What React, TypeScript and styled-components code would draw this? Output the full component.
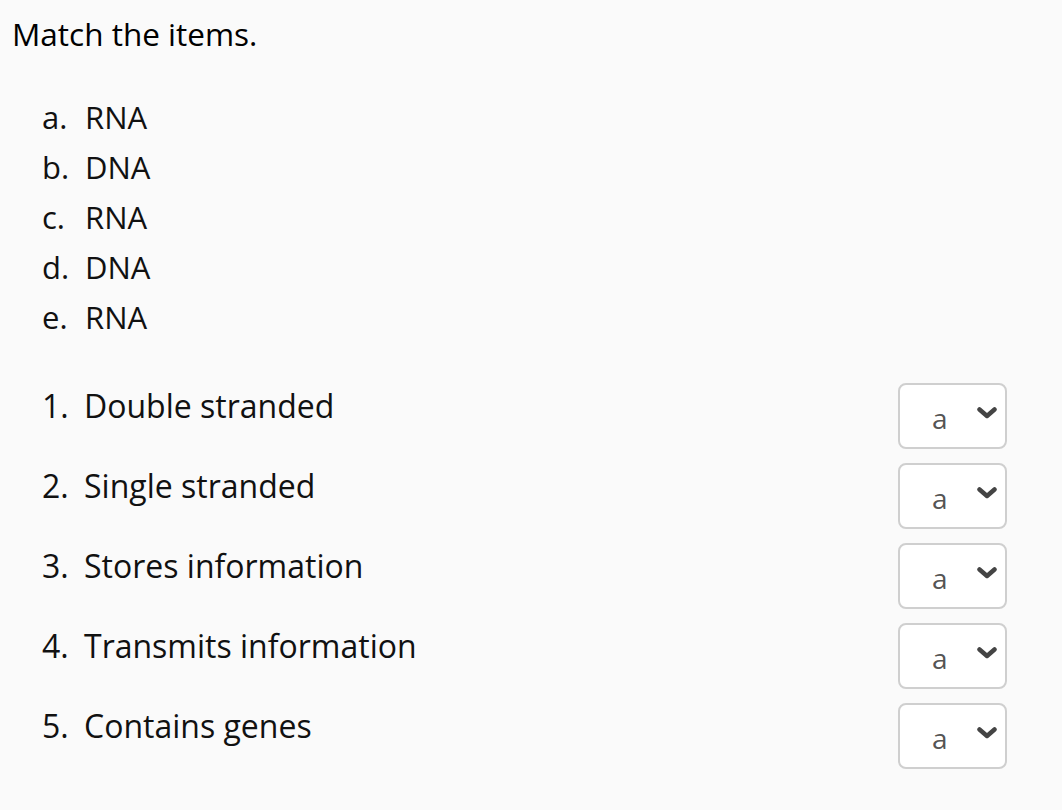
import styled, { createGlobalStyle } from "styled-components"

const GlobalStyle = createGlobalStyle`
  html, body {
    margin: 0;
    padding: 0;
    background: #fafafa;
  }
  body {
    font-family: "Open Sans", "Liberation Sans", sans-serif;
    color: #111;
  }
`

const Page = styled.div`
  padding: 10px 55px 0 12px;
  min-height: 800px;
  box-sizing: border-box;
`

const Title = styled.div`
  font-size: 31.5px;
  line-height: 48px;
  color: #000;
`

const Options = styled.ol`
  list-style: none;
  margin: 34px 0 0 30px;
  padding: 0;
`

const Option = styled.li`
  display: flex;
  font-size: 31px;
  line-height: 50px;
`

const Marker = styled.span`
  width: ${(props: { width: number }) => props.width}px;
  flex-shrink: 0;
`

const Questions = styled.ol`
  list-style: none;
  margin: 40px 0 0 30px;
  padding: 0;
`

const Question = styled.li`
  display: flex;
  justify-content: space-between;
  align-items: flex-start;
  height: 80px;
`

const Prompt = styled.div`
  display: flex;
  font-size: 32px;
  line-height: 48px;
`

const SelectBox = styled.div`
  margin-top: 1px;
  width: 109px;
  height: 66px;
  box-sizing: border-box;
  border: 2px solid #cfcfcf;
  border-radius: 8px;
  background: #fff;
  display: flex;
  align-items: center;
  padding: 0 8px 0 32px;
  font-size: 28px;
  color: #555;
`

const SelectValue = styled.span`
  flex: 1;
  margin-top: 4px;
`

const Chevron = () => (
  <svg width="20" height="12" viewBox="0 0 20 12" style={{ marginTop: -6 }}>
    <polyline points="2.5,2.5 10,9 17.5,2.5" fill="none" stroke="#444" strokeWidth="4.5" strokeLinecap="round" strokeLinejoin="round" />
  </svg>
)

const options = [
  ["a.", "RNA"],
  ["b.", "DNA"],
  ["c.", "RNA"],
  ["d.", "DNA"],
  ["e.", "RNA"],
]

const questions = [
  "Double stranded",
  "Single stranded",
  "Stores information",
  "Transmits information",
  "Contains genes",
]

export default function App() {
  return (
    <Page>
      <GlobalStyle />
      <Title>Match the items.</Title>
      <Options>
        {options.map(([m, t]) => (
          <Option key={m}>
            <Marker width={43}>{m}</Marker>
            <span>{t}</span>
          </Option>
        ))}
      </Options>
      <Questions>
        {questions.map((q, i) => (
          <Question key={q}>
            <Prompt>
              <Marker width={42}>{i + 1}.</Marker>
              <span>{q}</span>
            </Prompt>
            <SelectBox>
              <SelectValue>a</SelectValue>
              <Chevron />
            </SelectBox>
          </Question>
        ))}
      </Questions>
    </Page>
  )
}
